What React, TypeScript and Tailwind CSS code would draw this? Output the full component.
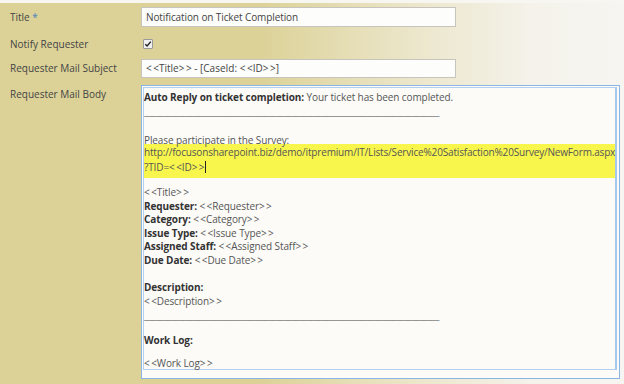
import React from "react";

const Dash = () => (
  <div className="text-[#777] tracking-[-0.5px] whitespace-nowrap h-[13.5px]">
    {"_".repeat(76)}
  </div>
);

const B = ({ children }: { children: React.ReactNode }) => (
  <b className="text-[#333] font-bold">{children}</b>
);

const T = ({ name }: { name: string }) => (
  <span>
    <span className="mr-[1.5px]">&lt;</span>&lt;{name}&gt;<span className="ml-[1.5px]">&gt;</span>
  </span>
);

export default function App() {
  return (
    <div
      className="w-[624px] h-[384px] overflow-hidden bg-[linear-gradient(to_right,#dcd298_0%,#dcd298_42%,#ebe5c8_65%,#f4f2ea_85%,#f6f5f1_100%)] text-[10px] text-[#444]"
      style={{ fontFamily: '"Segoe UI", "Open Sans", sans-serif' }}
    >
      <div className="h-[3px] bg-[#f7f6f0]" />
      <div className="flex flex-col">
        {/* Title */}
        <div className="flex items-center mt-[4px] h-[20px]">
          <div className="w-[141px] pl-[10px]">
            Title <span className="text-[#4a7ec0]">*</span>
          </div>
          <div className="w-[315px] h-[20px] border border-[#c6c4bc] bg-[#fdfdfb] px-[4px] flex items-center text-[#444] tracking-[-0.1px]">
            <span>Notification on Ticket Completion</span>
          </div>
        </div>
        {/* Notify */}
        <div className="flex items-center mt-[8px] h-[18px]">
          <div className="w-[143px] pl-[10px]">Notify Requester</div>
          <div className="w-[10px] h-[10px] border border-[#9a9a9a] bg-[#f0f0f0] rounded-[1px] flex items-center justify-center">
            <svg width="8" height="8" viewBox="0 0 8 8">
              <path d="M1.3 4.2 L3.1 6 L6.8 1.6" fill="none" stroke="#222" strokeWidth="1.4" />
            </svg>
          </div>
        </div>
        {/* Subject */}
        <div className="flex items-center mt-[6px] h-[19px]">
          <div className="w-[141px] pl-[10px]">Requester Mail Subject</div>
          <div className="w-[315px] h-[19px] border border-[#c6c4bc] bg-[#fdfdfb] px-[4px] flex items-center text-[#444]">
            <span>
              <T name="Title" /> - [CaseId: <T name="ID" />]
            </span>
          </div>
        </div>
        {/* Body */}
        <div className="flex mt-[7px]">
          <div className="w-[141px] pl-[10px] pt-[2px]">Requester Mail Body</div>
          <div className="w-[479px] h-[294px] border border-[#8ab6e6] bg-[#fcfbf8] p-[1px] pr-[2px] pb-[8px]">
            <div className="h-full border border-[#b3d0f0] border-r-[2px] border-r-[#a6c8ee] leading-[13.5px] text-[#555] pt-[3px] tracking-[-0.1px]">
              <div><B>Auto Reply on ticket completion:</B> Your ticket has been completed.</div>
              <Dash />
              <div className="h-[13.5px]" />
              <div className="mt-[2px]">Please participate in the Survey:</div>
              <div className="bg-[#f8f64c] -mt-[3px] pt-[2px] pb-[4px]">
                <div className="whitespace-nowrap tracking-[-0.17px]">http://focusonsharepoint.biz/demo/itpremium/IT/Lists/Service%20Satisfaction%20Survey/NewForm.aspx</div>
                <div className="mt-[1px]">
                  ?TID=<T name="ID" />
                  <span className="inline-block w-[1px] h-[12px] bg-[#222] ml-[1px] align-[-2px]" />
                </div>
              </div>
              <div className="mt-[8px]"><T name="Title" /></div>
              <div><B>Requester:</B> <T name="Requester" /></div>
              <div><B>Category:</B> <T name="Category" /></div>
              <div><B>Issue Type:</B> <T name="Issue Type" /></div>
              <div><B>Assigned Staff:</B> <T name="Assigned Staff" /></div>
              <div><B>Due Date:</B> <T name="Due Date" /></div>
              <div className="h-[13.5px]" />
              <div><B>Description:</B></div>
              <div className="mt-[1px]"><T name="Description" /></div>
              <Dash />
              <div className="h-[12px]" />
              <div><B>Work Log:</B></div>
              <div className="h-[9px]" />
              <div><T name="Work Log" /></div>
            </div>
          </div>
        </div>
      </div>
    </div>
  );
}
